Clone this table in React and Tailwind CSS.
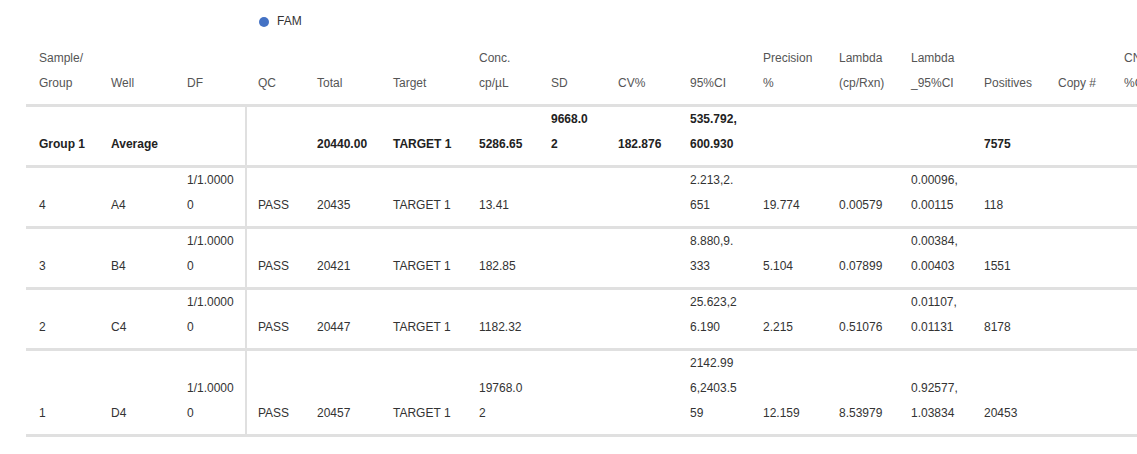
import React from 'react';

const GRID =
  'grid grid-cols-[72px_76px_73px_57px_76px_86px_72px_67px_72px_73px_76px_72px_73px_74px_66px_80px]';

const header = [
  ['Sample/', 'Group'],
  ['Well'],
  ['DF'],
  ['QC'],
  ['Total'],
  ['Target'],
  ['Conc.', 'cp/µL'],
  ['SD'],
  ['CV%'],
  ['95%CI'],
  ['Precision', '%'],
  ['Lambda', '(cp/Rxn)'],
  ['Lambda', '_95%CI'],
  ['Positives'],
  ['Copy #'],
  ['CNV', '%CV'],
];

const rows = [
  {
    bold: true,
    cells: [
      ['Group 1'], ['Average'], [], [], ['20440.00'], ['TARGET 1'], ['5286.65'],
      ['9668.0', '2'], ['182.876'], ['535.792,', '600.930'], [], [], [], ['7575'], [], [],
    ],
  },
  {
    cells: [
      ['4'], ['A4'], ['1/1.0000', '0'], ['PASS'], ['20435'], ['TARGET 1'], ['13.41'],
      [], [], ['2.213,2.', '651'], ['19.774'], ['0.00579'], ['0.00096,', '0.00115'], ['118'], [], [],
    ],
  },
  {
    cells: [
      ['3'], ['B4'], ['1/1.0000', '0'], ['PASS'], ['20421'], ['TARGET 1'], ['182.85'],
      [], [], ['8.880,9.', '333'], ['5.104'], ['0.07899'], ['0.00384,', '0.00403'], ['1551'], [], [],
    ],
  },
  {
    cells: [
      ['2'], ['C4'], ['1/1.0000', '0'], ['PASS'], ['20447'], ['TARGET 1'], ['1182.32'],
      [], [], ['25.623,2', '6.190'], ['2.215'], ['0.51076'], ['0.01107,', '0.01131'], ['8178'], [], [],
    ],
  },
  {
    cells: [
      ['1'], ['D4'], ['1/1.0000', '0'], ['PASS'], ['20457'], ['TARGET 1'], ['19768.0', '2'],
      [], [], ['2142.99', '6,2403.5', '59'], ['12.159'], ['8.53979'], ['0.92577,', '1.03834'], ['20453'], [], [],
    ],
  },
];

const Cell = ({ lines, idx, divider }) => (
  <div
    className={`flex flex-col justify-end pb-2 whitespace-nowrap ${idx === 3 ? 'pl-[11px]' : 'pl-[13px]'} ${
      divider && idx === 2 ? 'border-r-[2px] border-[#e0e0e0]' : ''
    }`}
  >
    {lines.map((l, i) => (
      <span key={i} className="block">
        {l}
      </span>
    ))}
  </div>
);

const App = () => {
  return (
    <div
      className="w-[1137px] h-[454px] overflow-hidden bg-white text-[12px] leading-[25px] text-[#333]"
      style={{ fontFamily: '"Liberation Sans", Arial, sans-serif' }}
    >
      {/* Legend */}
      <div className="flex items-center gap-2 pl-[259px] pt-[9px] mb-[12px] h-[34px]">
        <span className="w-[10px] h-[10px] rounded-full bg-[#4472c4]"></span>
        <span className="text-[#333]">FAM</span>
      </div>

      {/* Results table */}
      <div className="ml-[26px] w-[1200px]">
        <div className={`${GRID} text-[#555] border-b-[3px] border-[#e0e0e0]`}>
          {header.map((h, i) => (
            <Cell key={i} lines={h} idx={i} />
          ))}
        </div>
        {rows.map((r, ri) => (
          <div
            key={ri}
            className={`${GRID} border-b-[3px] border-[#e0e0e0] ${r.bold ? 'font-bold text-[#222]' : 'text-[#333]'}`}
          >
            {r.cells.map((c, i) => (
              <Cell key={i} lines={c} idx={i} divider />
            ))}
          </div>
        ))}
      </div>
    </div>
  );
};

export default App;
